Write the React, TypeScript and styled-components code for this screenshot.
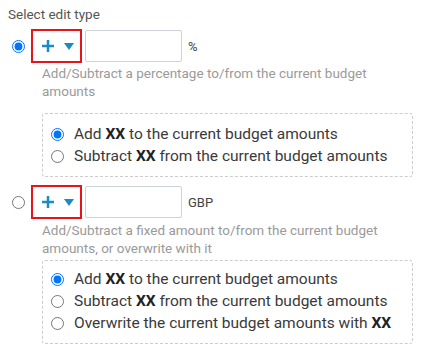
import React from "react";
import styled, { createGlobalStyle } from "styled-components";

const GlobalStyle = createGlobalStyle`
  body {
    margin: 0;
    background: #fff;
    font-family: Roboto, "Liberation Sans", sans-serif;
    color: #3a3a3a;
  }
`;

const Page = styled.div`
  padding: 4px 8px 0 8px;
  width: 422px;
  box-sizing: border-box;
`;

const Title = styled.div`
  font-size: 13.5px;
  line-height: 20px;
  color: #555;
  margin-bottom: 5px;
`;

const EditRow = styled.div`
  display: flex;
  align-items: center;
  height: 34px;
`;

const Radio = styled.input.attrs({ type: "radio" })`
  width: 13px;
  height: 13px;
  margin: 0 6px 0 4px;
  flex: none;
`;

const SignPicker = styled.div`
  box-sizing: border-box;
  width: 51px;
  height: 34px;
  border: 2px solid #e8141c;
  display: flex;
  align-items: center;
  padding-left: 9px;
  gap: 10px;
`;

const AmountInput = styled.input`
  box-sizing: border-box;
  width: 97px;
  height: 32px;
  margin-left: 3px;
  border: 1px solid #ccd3da;
  border-radius: 2px;
  outline: none;
`;

const Unit = styled.span`
  margin-left: 6px;
  font-size: 13px;
  color: #444;
`;

const Desc = styled.div<{ $gap: number }>`
  margin: ${(p) => p.$gap}px 0 0 34px;
  font-size: 13.5px;
  line-height: 18px;
  color: #9a9a9a;
  width: 350px;
`;

const Choices = styled.div<{ $gap: number; $top: number }>`
  box-sizing: border-box;
  margin: ${(p) => p.$gap}px 0 8px 34px;
  width: 371px;
  border: 1px dashed #ccc;
  border-radius: 3px;
  padding: ${(p) => p.$top}px 0 9px 7px;
`;

const Choice = styled.label`
  display: flex;
  align-items: center;
  font-size: 15.5px;
  line-height: 22px;
  color: #3a3a3a;
  white-space: pre;
  b {
    font-weight: 700;
    color: #222;
  }
  input {
    margin: 0 10px 0 1px;
  }
`;

const Plus = () => (
  <svg width="12" height="12" viewBox="0 0 12 12">
    <rect x="4.75" y="0" width="2.5" height="12" fill="#1b8bc5" />
    <rect x="0" y="4.75" width="12" height="2.5" fill="#1b8bc5" />
  </svg>
);

const Caret = () => (
  <svg width="10" height="7" viewBox="0 0 10 7">
    <polygon points="0,0 10,0 5,7" fill="#1b8bc5" />
  </svg>
);

type Opt = { pre: string; post: string };

type EditTypeProps = {
  name: string;
  checked: boolean;
  unit: string;
  desc: string;
  descGap: number;
  boxGap: number;
  boxTop: number;
  options: Opt[];
};

const EditType = ({ name, checked, unit, desc, descGap, boxGap, boxTop, options }: EditTypeProps) => (
  <>
    <EditRow>
      <Radio name="edittype" defaultChecked={checked} />
      <SignPicker>
        <Plus />
        <Caret />
      </SignPicker>
      <AmountInput />
      <Unit>{unit}</Unit>
    </EditRow>
    <Desc $gap={descGap}>{desc}</Desc>
    <Choices $gap={boxGap} $top={boxTop}>
      {options.map((o, i) => (
        <Choice key={i}>
          <Radio name={name} defaultChecked={i === 0} />
          {o.pre} <b>XX</b>
          {o.post ? " " + o.post : ""}
        </Choice>
      ))}
    </Choices>
  </>
);

export default function App() {
  return (
    <Page>
      <GlobalStyle />
      <Title>Select edit type</Title>
      <EditType
        name="pct"
        checked
        unit="%"
        desc="Add/Subtract a percentage to/from the current budget amounts"
        descGap={1}
        boxGap={13}
        boxTop={9}
        options={[
          { pre: "Add", post: "to the current budget amounts" },
          { pre: "Subtract", post: "from the current budget amounts" },
        ]}
      />
      <EditType
        name="fixed"
        checked={false}
        unit="GBP"
        desc="Add/Subtract a fixed amount to/from the current budget amounts, or overwrite with it"
        descGap={2}
        boxGap={3}
        boxTop={7}
        options={[
          { pre: "Add", post: "to the current budget amounts" },
          { pre: "Subtract", post: "from the current budget amounts" },
          { pre: "Overwrite the current budget amounts with", post: "" },
        ]}
      />
    </Page>
  );
}
